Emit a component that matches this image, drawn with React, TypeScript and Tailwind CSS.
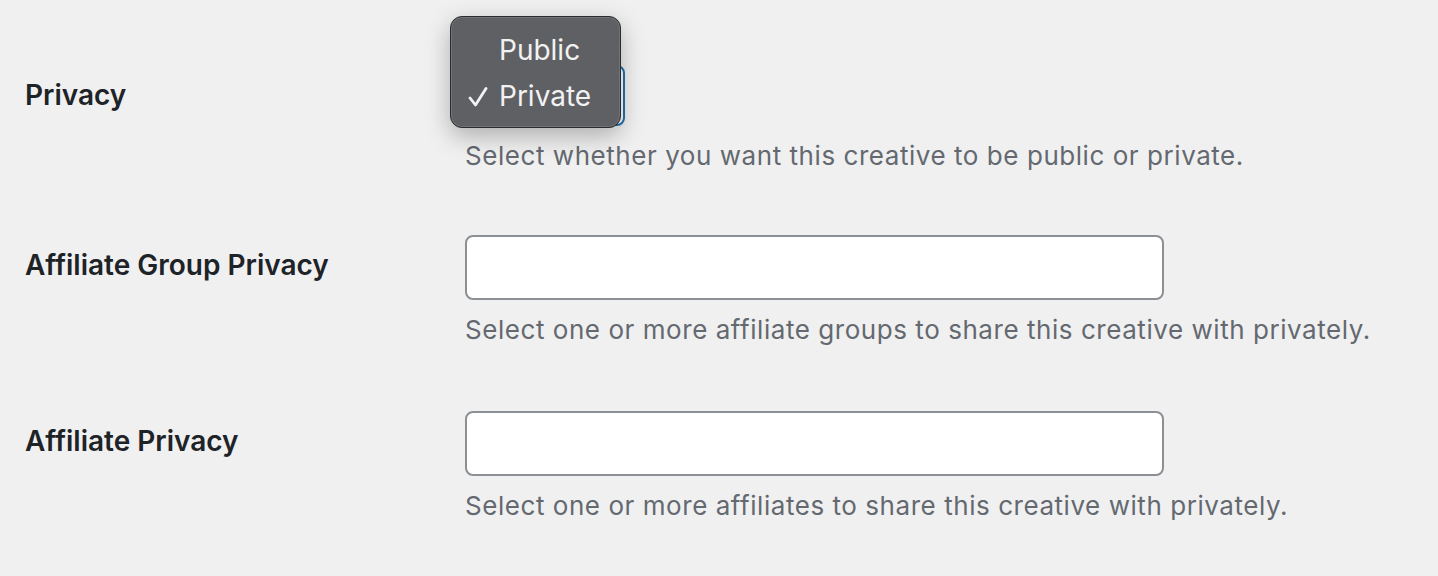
import React from "react";

const font = { fontFamily: "Inter, 'Noto Sans', sans-serif" };

function Row({ label, children, desc, labelPt = "pt-[12px]", pb = "pb-[31px]" }: { label: string; children: React.ReactNode; desc: string; labelPt?: string; pb?: string }) {
  return (
    <div className={`flex pt-[30px] ${pb}`}>
      <div className={`w-[440px] shrink-0 ${labelPt} text-[28px] leading-[36px] font-semibold text-[#1d2327]`}>{label}</div>
      <div className="flex flex-col">
        {children}
        <p className="mt-[10px] text-[26px] leading-[40px] tracking-[0.55px] text-[#646970]">{desc}</p>
      </div>
    </div>
  );
}

export default function App() {
  return (
    <div className="w-[1438px] h-[576px] bg-[#f0f0f1] overflow-hidden pl-[25px] pt-[35px]" style={font}>
      <Row label="Privacy" desc="Select whether you want this creative to be public or private." labelPt="pt-[12px]" pb="pb-[29px]">
        <div className="relative w-[160px] h-[61px]">
          <div className="w-full h-full rounded-[8px] border-2 border-[#2271b1] bg-white" />
          <div className="absolute left-[-15px] top-[-49px] w-[171px] h-[112px] rounded-[12px] border border-[#2b2b2d] bg-[#5f6064] shadow-[0_8px_24px_rgba(0,0,0,0.28),inset_0_0_0_1px_rgba(255,255,255,0.12)] text-[28px] leading-[46px] text-[#f2f2f2] pt-[10px]">
            <div className="flex items-center pl-[48px]">Public</div>
            <div className="flex items-center pl-[17px]">
              <svg width="20" height="20" viewBox="0 0 20 20" className="mr-[11px] mt-[2px]" fill="none">
                <path d="M2 11 L7.5 18 L18 1.5" stroke="#f2f2f2" strokeWidth="2.8" strokeLinecap="round" strokeLinejoin="round" />
              </svg>
              <span>Private</span>
            </div>
          </div>
        </div>
      </Row>
      <Row label="Affiliate Group Privacy" desc="Select one or more affiliate groups to share this creative with privately.">
        <div className="w-[699px] h-[65px] rounded-[8px] border-2 border-[#8c8f94] bg-white" />
      </Row>
      <Row label="Affiliate Privacy" desc="Select one or more affiliates to share this creative with privately.">
        <div className="w-[699px] h-[65px] rounded-[8px] border-2 border-[#8c8f94] bg-white" />
      </Row>
    </div>
  );
}
